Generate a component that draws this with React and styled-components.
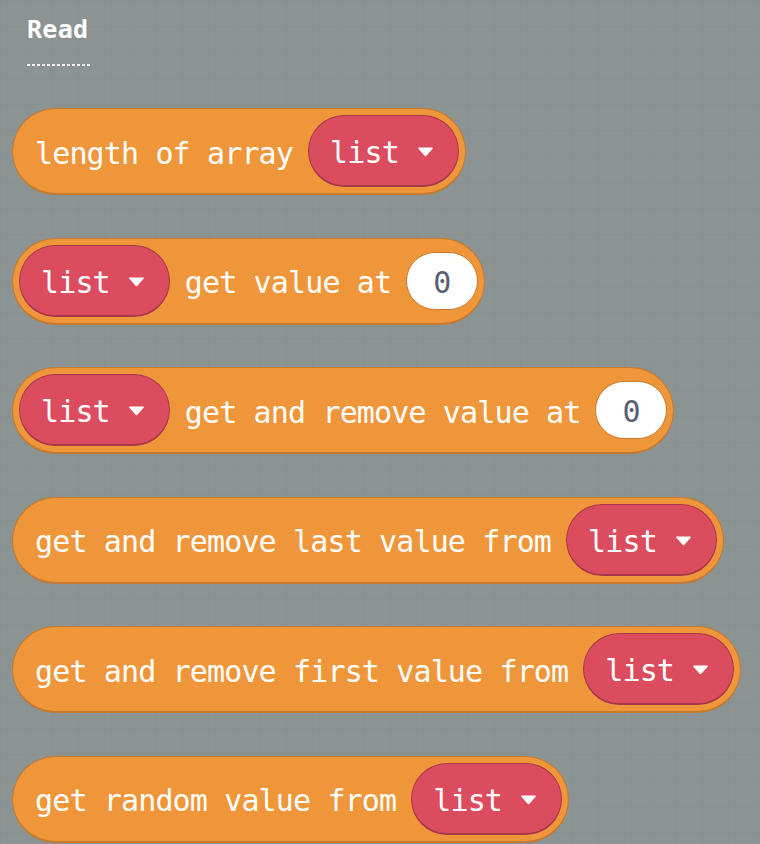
import React from "react";
import styled, { createGlobalStyle } from "styled-components";

const GlobalStyle = createGlobalStyle`
  html, body {
    margin: 0;
    padding: 0;
    background: #8b9492;
  }
  body {
    font-family: "DejaVu Sans Mono", "Liberation Mono", monospace;
  }
`;

const Workspace = styled.div`
  min-height: 844px;
  box-sizing: border-box;
  padding: 14px 0 0 12px;
  background-color: #8b9492;
  background-image:
    linear-gradient(to right, rgba(120, 128, 126, 0.12) 1px, transparent 1px),
    linear-gradient(to bottom, rgba(120, 128, 126, 0.12) 1px, transparent 1px);
  background-size: 26px 26px;
  overflow: hidden;
`;

const Heading = styled.div`
  margin-left: 15px;
  display: inline-block;
  color: #fff;
  font-size: 25px;
  font-weight: bold;
  letter-spacing: 0.3px;
  line-height: 28px;
  padding-top: 2px;
`;

const DottedLine = styled.div`
  margin: 20px 0 0 15px;
  width: 63px;
  height: 2px;
  background-image: repeating-linear-gradient(
    to right,
    rgba(255, 255, 255, 0.9) 0 3px,
    transparent 3px 5px
  );
`;

const BlockList = styled.div`
  display: flex;
  flex-direction: column;
  align-items: flex-start;
  gap: 42.5px;
  margin-top: 42px;
`;

const Block = styled.div`
  display: inline-flex;
  align-items: center;
  gap: 15px;
  box-sizing: border-box;
  height: 87px;
  padding: 0 6px 0 ${(p) => (p.$textFirst ? "22px" : "6px")};
  background: #f0963a;
  border: 1.5px solid #c57a30;
  border-bottom-width: 2.5px;
  border-radius: 44px;
`;

const Label = styled.span`
  color: #fff;
  font-size: 30px;
  letter-spacing: -0.86px;
  line-height: 1;
  white-space: pre;
  padding-top: 5px;
`;

const Dropdown = styled.div`
  display: inline-flex;
  align-items: center;
  gap: 18px;
  box-sizing: border-box;
  height: 72px;
  padding: 0 24px 0 21px;
  background: #dc4c5f;
  border: 1.5px solid #a83849;
  border-bottom-width: 2px;
  border-radius: 36px;
`;

const Caret = styled.svg`
  width: 17px;
  height: 11px;
  display: block;
  margin-top: 2px;
`;

const NumberField = styled.div`
  display: flex;
  align-items: center;
  justify-content: center;
  box-sizing: border-box;
  width: 72px;
  height: 58px;
  background: #fff;
  border: 1.5px solid #c57a30;
  border-radius: 29px;
  color: #575e75;
  font-size: 30px;
  line-height: 1;
  padding-top: 4px;
`;

function ListDropdown() {
  return (
    <Dropdown>
      <Label>list</Label>
      <Caret viewBox="0 0 17 11">
        <path
          d="M2 1.5 L15 1.5 Q16.5 1.5 15.6 2.8 L9.6 9.6 Q8.5 10.8 7.4 9.6 L1.4 2.8 Q0.5 1.5 2 1.5 Z"
          fill="#fff"
        />
      </Caret>
    </Dropdown>
  );
}

function App() {
  return (
    <Workspace>
      <GlobalStyle />
      <Heading>Read</Heading>
      <DottedLine />
      <BlockList>
        <Block $textFirst>
          <Label>length of array</Label>
          <ListDropdown />
        </Block>
        <Block>
          <ListDropdown />
          <Label>get value at</Label>
          <NumberField>0</NumberField>
        </Block>
        <Block>
          <ListDropdown />
          <Label>get and remove value at</Label>
          <NumberField>0</NumberField>
        </Block>
        <Block $textFirst>
          <Label>get and remove last value from</Label>
          <ListDropdown />
        </Block>
        <Block $textFirst>
          <Label>get and remove first value from</Label>
          <ListDropdown />
        </Block>
        <Block $textFirst>
          <Label>get random value from</Label>
          <ListDropdown />
        </Block>
      </BlockList>
    </Workspace>
  );
}

export default App;
